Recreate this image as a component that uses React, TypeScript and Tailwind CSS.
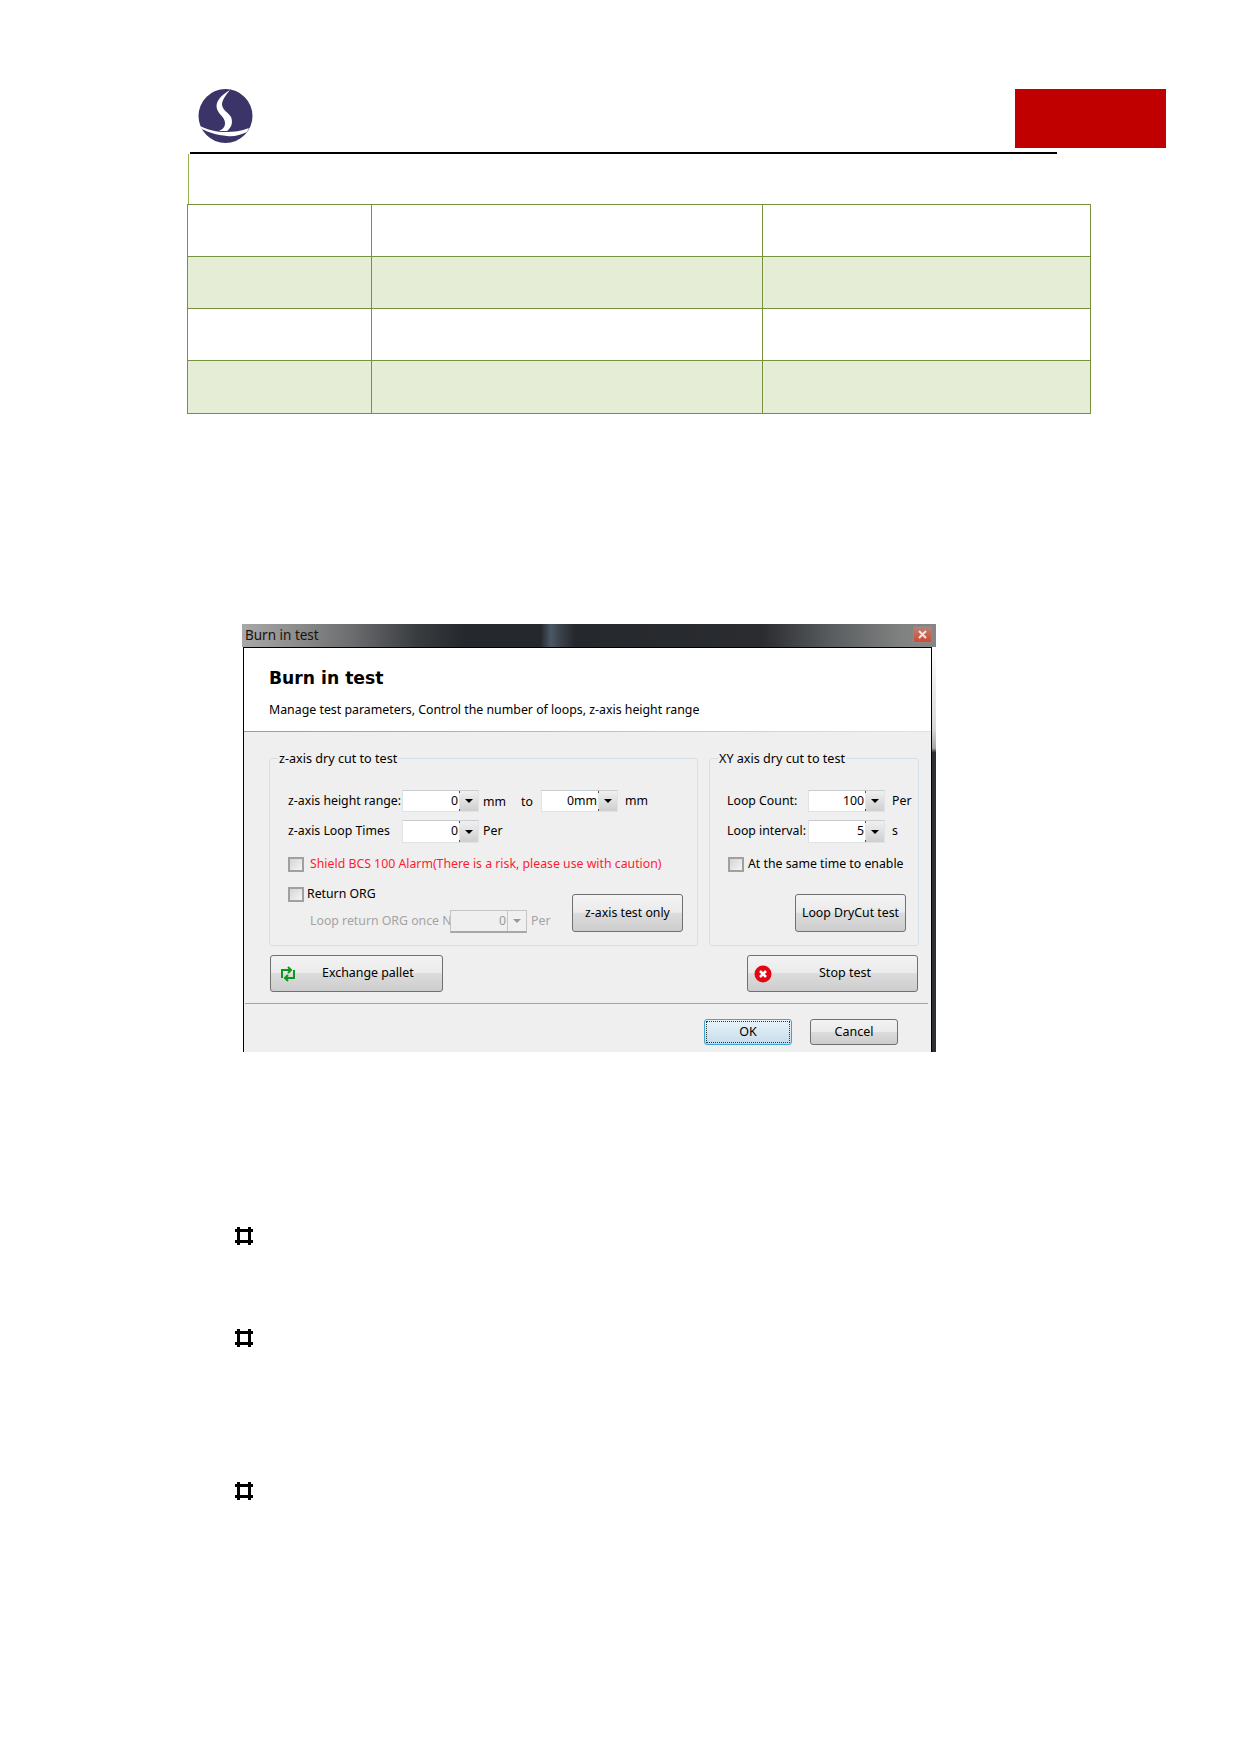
import type { ReactNode } from 'react'

const rows = [false, true, false, true]
const rowHeights = ['h-[52px]', 'h-[52px]', 'h-[52px]', 'h-[53px]']

function Logo() {
  return (
    <svg width="55" height="54" viewBox="8 9 55 54">
      <circle cx="35.5" cy="36" r="27" fill="#3b3469" />
      <path d="M40 10 C30 16 25 22 27 29 C29 35 35 37 35 43 C35 47 33 49 29 51 L37 51 C42 47 43 42 41 37 C38 32 32 30 32 24 C33 18 37 14 40 10Z" fill="#fff" />
      <path d="M10 46 C19 50 26 52 36 52 C44 52 51 51 59 48 L57 52 C50 55 44 57 37 56 C27 55 17 52 12 49 Z" fill="#fff" />
    </svg>
  )
}

function Bullet({ className }: { className: string }) {
  return (
    <svg width="18" height="18" viewBox="0 0 18 18" className={className}>
      <path d="M2 0h3v2h8V0h3v2h2v3h-2v8h2v3h-2v2h-3v-2H5v2H2v-2H0v-3h2V5H0V2h2zM5 5v8h8V5z" fill="#000" fillRule="evenodd" />
    </svg>
  )
}

function Spin({ value, disabled, h = 'h-[22px]' }: { value: string; disabled?: boolean; h?: string }) {
  return (
    <div className={`w-[77px] ${h} flex shrink-0 border ${disabled ? 'border-[#c4c4c4] border-b-2 border-b-[#a8a8a8] bg-[#efefef] text-[#9a9a9a]' : 'border-[#e0e3e6] border-t-[#c9ccd0] bg-white text-black'}`}>
      <div className="flex-1 flex items-center justify-end pr-[1px]">{value}</div>
      <div className={`relative w-[19px] flex items-center justify-center border-l ${disabled ? 'border-[#c4c4c4] bg-[#f0f0f0]' : 'border-[#e6e6e6] bg-[linear-gradient(#f0f0f0,#cfcfcf)]'}`}>
        <span className={`w-0 h-0 border-x-[4px] border-x-transparent border-t-[4px] ${disabled ? 'border-t-[#999]' : 'border-t-black'}`} />
        {!disabled && <span className="absolute -left-px top-0 w-px h-[2px] bg-[#555]" />}
        {!disabled && <span className="absolute -left-px bottom-0 w-px h-[2px] bg-[#555]" />}
      </div>
    </div>
  )
}

function Check({ children, className = '', gap = 'ml-[6px]' }: { children: ReactNode; className?: string; gap?: string }) {
  return (
    <div className={`flex items-center h-[15px] ${className}`}>
      <span className="w-[16px] h-[15px] shrink-0 border-2 border-[#a0a0a0] bg-[linear-gradient(135deg,#d4d4d4,#f6f6f6)]" />
      <span className={gap}>{children}</span>
    </div>
  )
}

function Btn({ className, children }: { className: string; children: ReactNode }) {
  return (
    <div className={`flex items-center justify-center border border-[#707070] rounded-[3px] bg-[linear-gradient(#f3f3f3_0%,#ebebeb_48%,#dcdcdc_50%,#cdcdcd_100%)] ${className}`}>
      {children}
    </div>
  )
}

export default function App() {
  return (
    <div className="w-[1241px] h-[1754px] bg-white overflow-hidden flex flex-col font-['Noto_Sans',sans-serif] text-[12.3px] leading-none text-black">
      <div className="h-[152px] pt-[89px] pl-[198px] flex">
        <Logo />
        <div className="ml-[762px] w-[151px] h-[59px] bg-[#c00000]" />
      </div>
      <div className="ml-[190px] w-[867px] h-[2px] bg-black shrink-0" />
      <div className="ml-[188px] w-px h-[50px] bg-[#92b84a] shrink-0" />

      <div className="ml-[187px] w-[904px] border border-[#76923c] border-b-0 shrink-0">
        {rows.map((shaded, i) => (
          <div key={i} className={`grid grid-cols-[184px_391px_1fr] ${rowHeights[i]} border-b border-[#76923c] ${shaded ? 'bg-[#e5edd7]' : 'bg-white'}`}>
            <div className="border-r border-[#76923c]" />
            <div className="border-r border-[#76923c]" />
            <div />
          </div>
        ))}
      </div>

      <div className="ml-[242px] mt-[210px] w-[694px] h-[428px] shrink-0 flex flex-col">
        <div className="h-[23px] pl-[3px] pr-[4px] flex items-center justify-between bg-[linear-gradient(90deg,#a8a8a8_0%,#8c8c8c_8%,#6a6c6e_16%,#3a3d40_25%,#25282c_32%,#25282c_43%,#4a5866_44.5%,#3a4048_46%,#25282c_48%,#2a2c30_75%,#5a5d5f_85%,#808282_95%,#868686_100%)]">
          <span className="text-[13.5px] text-[#1a1206]">Burn in test</span>
          <div className="w-[19px] h-[17px] mb-[2px] flex items-center justify-center border border-[#8a8a8a] bg-[linear-gradient(#b98276,#d04a30)]">
            <svg width="9" height="9" viewBox="0 0 9 9">
              <path d="M1 1l7 7M8 1l-7 7" stroke="#e8e8e8" strokeWidth="2" />
            </svg>
          </div>
        </div>
        <div className="flex-1 flex min-h-0">
          <div className="ml-px w-[689px] border border-b-0 border-black flex flex-col bg-[#efefef]">
            <div className="h-[83px] bg-white pl-[25px]">
              <div className="pt-[22px] h-[48px] text-[17.2px] font-bold font-['DejaVu_Sans',sans-serif]">Burn in test</div>
              <div className="mt-[8px] text-[12.35px]">Manage test parameters, Control the number of loops, z-axis height range</div>
            </div>
            <div className="h-px shrink-0 bg-[linear-gradient(90deg,#6aa6e8,#d4e6f5)]" />

            <div className="mt-[26px] ml-[25px] flex gap-[11px]">
              <div className="relative w-[429px] h-[188px] border border-[#d6dfe6] rounded-[3px] pl-[18px] pt-[31px]">
                <span className="absolute left-[8px] -top-[6px] px-[1px] bg-[#efefef] text-[12.6px]">z-axis dry cut to test</span>
                <div className="flex items-center h-[22px]">
                  <span className="w-[114px]">z-axis height range:</span>
                  <Spin value="0" />
                  <span className="ml-[4px] w-[38px] mt-[2px]">mm</span>
                  <span className="w-[20px] mt-[2px]">to</span>
                  <Spin value="0mm" />
                  <span className="ml-[7px]">mm</span>
                </div>
                <div className="flex items-center h-[23px] mt-[8px]">
                  <span className="w-[114px]">z-axis Loop Times</span>
                  <Spin value="0" h="h-[23px]" />
                  <span className="ml-[4px]">Per</span>
                </div>
                <Check className="mt-[14px] text-[#ff1a30]">Shield BCS 100 Alarm(There is a risk, please use with caution)</Check>
                <div className="flex">
                  <div className="w-[284px] shrink-0">
                    <Check className="mt-[15px]" gap="ml-[3px]">Return ORG</Check>
                    <div className="flex items-center mt-[8px] ml-[22px] h-[23px] text-[#a4a4a4]">
                      <span className="w-[140px] whitespace-nowrap">Loop return ORG once N</span>
                      <Spin value="0" disabled h="h-[23px]" />
                      <span className="ml-[4px]">Per</span>
                    </div>
                  </div>
                  <Btn className="mt-[22px] w-[111px] h-[38px]">z-axis test only</Btn>
                </div>
              </div>

              <div className="relative w-[210px] h-[188px] border border-[#d6dfe6] rounded-[3px] pl-[17px] pt-[31px]">
                <span className="absolute left-[8px] -top-[6px] px-[1px] bg-[#efefef] text-[12.6px]">XY axis dry cut to test</span>
                <div className="flex items-center h-[22px]">
                  <span className="w-[81px]">Loop Count:</span>
                  <Spin value="100" />
                  <span className="ml-[7px]">Per</span>
                </div>
                <div className="flex items-center h-[23px] mt-[8px]">
                  <span className="w-[81px]">Loop interval:</span>
                  <Spin value="5" h="h-[23px]" />
                  <span className="ml-[7px]">s</span>
                </div>
                <Check className="mt-[14px] ml-px" gap="ml-[4px]">At the same time to enable</Check>
                <Btn className="ml-[68px] mt-[22px] w-[111px] h-[38px]">Loop DryCut test</Btn>
              </div>
            </div>

            <div className="mt-[9px] ml-[26px] flex justify-between w-[648px]">
              <Btn className="w-[173px] h-[37px] !justify-start pl-[8px]">
                <svg width="18" height="18" viewBox="0 0 18 18">
                  <path d="M3 13V5h8M9 2l3 3-3 3M15 5v8H7M9 10l-3 3 3 3" fill="none" stroke="#0a9a1a" strokeWidth="2" />
                </svg>
                <span className="ml-[25px] text-[12.4px]">Exchange pallet</span>
              </Btn>
              <Btn className="w-[171px] h-[37px] !justify-start pl-[6px]">
                <svg width="18" height="18" viewBox="0 0 18 18">
                  <circle cx="9" cy="9" r="8.5" fill="#e30613" />
                  <path d="M6 6l6 6M12 6l-6 6" stroke="#fff" strokeWidth="2.6" />
                </svg>
                <span className="ml-[47px] text-[12.5px]">Stop test</span>
              </Btn>
            </div>

            <div className="mt-[11px] ml-px w-[683px] h-px bg-[#a3a3a3]" />

            <div className="mt-[15px] ml-[460px] flex gap-[18px]">
              <div className="w-[88px] h-[26px] border border-[#3ba5d8] rounded-[3px] p-px bg-[linear-gradient(#eaf4fa,#c5dcea)]">
                <div className="w-full h-full border border-dotted border-[#333] flex items-center justify-center text-[12.5px]">OK</div>
              </div>
              <Btn className="w-[88px] h-[26px] text-[12.5px]">Cancel</Btn>
            </div>
          </div>
          <div className="w-[4px] bg-[linear-gradient(#ffffff_0%,#d8d8d8_20%,#a8a8a8_25%,#2c2f33_26%,#2c2f33_100%)]" />
        </div>
      </div>

      <Bullet className="ml-[235px] mt-[175px] shrink-0" />
      <Bullet className="ml-[235px] mt-[84px] shrink-0" />
      <Bullet className="ml-[235px] mt-[135px] shrink-0" />
    </div>
  )
}
